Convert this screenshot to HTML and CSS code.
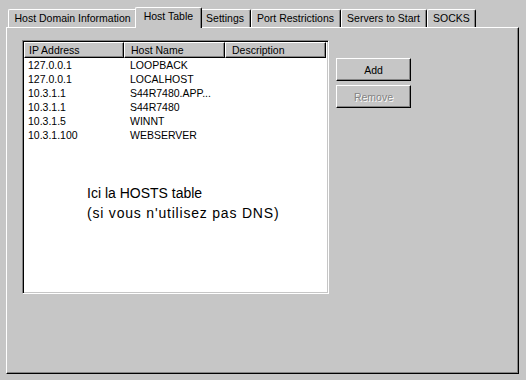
FILE: index.html
```html
<!DOCTYPE html>
<html lang="fr">
<head>
  <meta charset="UTF-8" />
  <title>Host Table</title>
  <link rel="stylesheet" href="styles.css">
</head>
<body>
  <div class="dialog">
    <div class="tabs">
      <div class="tab">Host Domain Information</div>
      <div class="tab active">Host Table</div>
      <div class="tab">Settings</div>
      <div class="tab">Port Restrictions</div>
      <div class="tab">Servers to Start</div>
      <div class="tab">SOCKS</div>
    </div>

    <div class="panel">
      <div class="list">
        <div class="head">
          <span class="col-ip">IP Address</span>
          <span class="col-name">Host Name</span>
          <span class="col-desc">Description</span>
        </div>
        <div class="row"><span class="col-ip">127.0.0.1</span><span class="col-name">LOOPBACK</span></div>
        <div class="row"><span class="col-ip">127.0.0.1</span><span class="col-name">LOCALHOST</span></div>
        <div class="row"><span class="col-ip">10.3.1.1</span><span class="col-name">S44R7480.APP...</span></div>
        <div class="row"><span class="col-ip">10.3.1.1</span><span class="col-name">S44R7480</span></div>
        <div class="row"><span class="col-ip">10.3.1.5</span><span class="col-name">WINNT</span></div>
        <div class="row"><span class="col-ip">10.3.1.100</span><span class="col-name">WEBSERVER</span></div>

        <p class="note">Ici la HOSTS table<br><span class="note-sub">(si vous n'utilisez pas DNS)</span></p>
      </div>

      <div class="actions">
        <button class="btn">Add</button>
        <button class="btn" disabled>Remove</button>
      </div>
    </div>
  </div>
</body>
</html>
```

FILE: styles.css
```css
body {
  margin: 0;
  background: #c6c6c6;
  color: #000;
  font-family: "Liberation Sans", Arial, sans-serif;
  font-size: 10.5px;
  width: 526px;
  height: 380px;
  overflow: hidden;
}

.dialog {
  padding-left: 6px;
}

/* tab strip */
.tabs {
  display: flex;
  align-items: flex-start;
  height: 18px;
  padding: 9px 0 0 2px;
}

.tab {
  box-sizing: border-box;
  height: 18px;
  padding: 0 5.5px;
  line-height: 17px;
  white-space: nowrap;
  border-top: 1px solid #fff;
  border-left: 1px solid #fff;
  border-right: 1px solid #000;
  border-radius: 2px 2px 0 0;
  box-shadow: inset -1px 0 #848484;
}

.tab.active {
  position: relative;
  z-index: 1;
  height: 21px;
  margin: -2px -2px 0;
  padding: 0 7.5px 3px;
  background: #c6c6c6;
}

/* page */
.panel {
  display: flex;
  align-items: flex-start;
  gap: 7px;
  box-sizing: border-box;
  width: 513px;
  height: 347px;
  padding: 12px 0 0 15px;
  border: 1px solid;
  border-color: #fff #000 #000 #fff;
  box-shadow: inset -1px -1px #848484;
}

.list {
  box-sizing: border-box;
  width: 307px;
  height: 254px;
  padding: 1px;
  background: #fff;
  border: 1px solid;
  border-color: #848484 #fff #fff #848484;
  box-shadow: inset 1px 1px #000, inset -1px -1px #c6c6c6;
}

.head {
  display: flex;
  height: 16px;
}

.head span {
  box-sizing: border-box;
  background: #c6c6c6;
  line-height: 14px;
  border: 1px solid;
  border-color: #fff #000 #000 #fff;
  box-shadow: inset -1px -1px #848484;
}

.row {
  display: flex;
  height: 14px;
  line-height: 14px;
}

.col-ip {
  box-sizing: border-box;
  width: 100px;
  padding-left: 4px;
}

.col-name {
  box-sizing: border-box;
  width: 101px;
  padding-left: 6px;
}

.col-desc {
  box-sizing: border-box;
  width: 101px;
  padding-left: 6px;
}

.note {
  margin: 41px 0 0 63px;
  font-size: 14px;
  line-height: 20px;
}

.note-sub {
  letter-spacing: 0.8px;
}

/* buttons */
.actions {
  display: flex;
  flex-direction: column;
  gap: 4px;
  margin-top: 18px;
}

.btn {
  box-sizing: border-box;
  width: 75px;
  height: 23px;
  padding: 0;
  background: #c6c6c6;
  color: #000;
  font: inherit;
  border: 1px solid;
  border-color: #fff #000 #000 #fff;
  box-shadow: inset -1px -1px #848484;
}

.btn:disabled {
  color: #848484;
  text-shadow: 1px 1px #fff;
}
```
